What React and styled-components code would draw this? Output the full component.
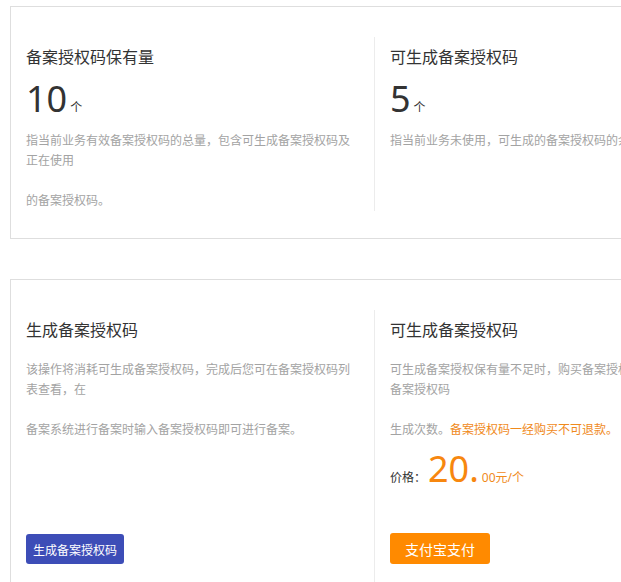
import React from 'react'
import styled, { createGlobalStyle } from 'styled-components'

const GlobalStyle = createGlobalStyle`
  html, body {
    margin: 0;
    padding: 0;
    background: #fff;
    overflow: hidden;
    font-family: "Noto Sans", "Noto Sans CJK SC", sans-serif;
  }
`

const Page = styled.div`
  width: 760px;
  padding: 6px 0 0 10px;
  display: flex;
  flex-direction: column;
  gap: 40px;
`

const Card = styled.div`
  border: 1px solid #dedede;
  display: flex;
  padding: ${p => p.$pad || '30px 0 27px'};
`

const Column = styled.div`
  width: 332px;
  padding: 8px 16px ${p => p.$bottom || '0'} 15px;
  display: flex;
  flex-direction: column;
  & + & {
    border-left: 1px solid #ececec;
  }
`

const Title = styled.h3`
  margin: 0;
  font-size: 16px;
  line-height: 24px;
  font-weight: 400;
  color: #333;
  white-space: nowrap;
`

const Amount = styled.div`
  margin-top: 8px;
  height: 44px;
  display: flex;
  align-items: baseline;
  color: #333;
  white-space: nowrap;
`

const Big = styled.span`
  font-size: 36px;
  line-height: 44px;
  color: ${p => p.$color || '#333'};
  font-weight: ${p => p.$weight || 400};
`

const Unit = styled.span`
  font-size: 12px;
  line-height: 16px;
  margin-left: 3px;
  color: ${p => p.$color || '#333'};
`

const Desc = styled.p`
  margin: ${p => p.$top || '10px'} 0 0;
  font-size: 12px;
  line-height: 20px;
  color: #a3a3a3;
  white-space: ${p => (p.$nowrap ? 'nowrap' : 'normal')};
`

const Warn = styled.span`
  color: #f08a1c;
`

const PriceRow = styled.div`
  margin-top: 7px;
  margin-bottom: 42px;
  height: 44px;
  display: flex;
  align-items: baseline;
  white-space: nowrap;
`

const PriceLabel = styled.span`
  font-size: 12px;
  line-height: 16px;
  color: #333;
  margin-right: 2px;
`

const Button = styled.button`
  margin-top: auto;
  align-self: flex-start;
  border: none;
  border-radius: 3px;
  cursor: pointer;
  color: #fff;
  font-family: "Noto Sans CJK SC", sans-serif;
  background: ${p => p.$bg};
  font-size: ${p => p.$size || '12px'};
  height: ${p => p.$h || '30px'};
  padding: 0 ${p => p.$px || '7px'};
`

export default function App() {
  return (
    <>
      <GlobalStyle />
      <Page>
        <Card>
          <Column>
            <Title>备案授权码保有量</Title>
            <Amount>
              <Big>10</Big>
              <Unit>个</Unit>
            </Amount>
            <Desc>
              指当前业务有效备案授权码的总量，包含可生成备案授权码及正在使用
              <br />
              <br />
              的备案授权码。
            </Desc>
          </Column>
          <Column>
            <Title>可生成备案授权码</Title>
            <Amount>
              <Big>5</Big>
              <Unit>个</Unit>
            </Amount>
            <Desc $nowrap>指当前业务未使用，可生成的备案授权码的余量。</Desc>
          </Column>
        </Card>

        <Card $pad="30px 0 0">
          <Column $bottom="30px">
            <Title>生成备案授权码</Title>
            <Desc $top="18px">
              该操作将消耗可生成备案授权码，完成后您可在备案授权码列表查看，在
              <br />
              <br />
              备案系统进行备案时输入备案授权码即可进行备案。
            </Desc>
            <Button $bg="#3d4db7">生成备案授权码</Button>
          </Column>
          <Column $bottom="30px">
            <Title>可生成备案授权码</Title>
            <Desc $top="18px">
              可生成备案授权保有量不足时，购买备案授权码可增加可生成备案授权码
              <br />
              <br />
              生成次数。<Warn>备案授权码一经购买不可退款。</Warn>
            </Desc>
            <PriceRow>
              <PriceLabel>价格：</PriceLabel>
              <Big $color="#f7870f">20.</Big>
              <Unit $color="#f08a1c">00元/个</Unit>
            </PriceRow>
            <Button $bg="#ff8a00" $size="14px" $h="31px" $px="15px">
              支付宝支付
            </Button>
          </Column>
        </Card>
      </Page>
    </>
  )
}
